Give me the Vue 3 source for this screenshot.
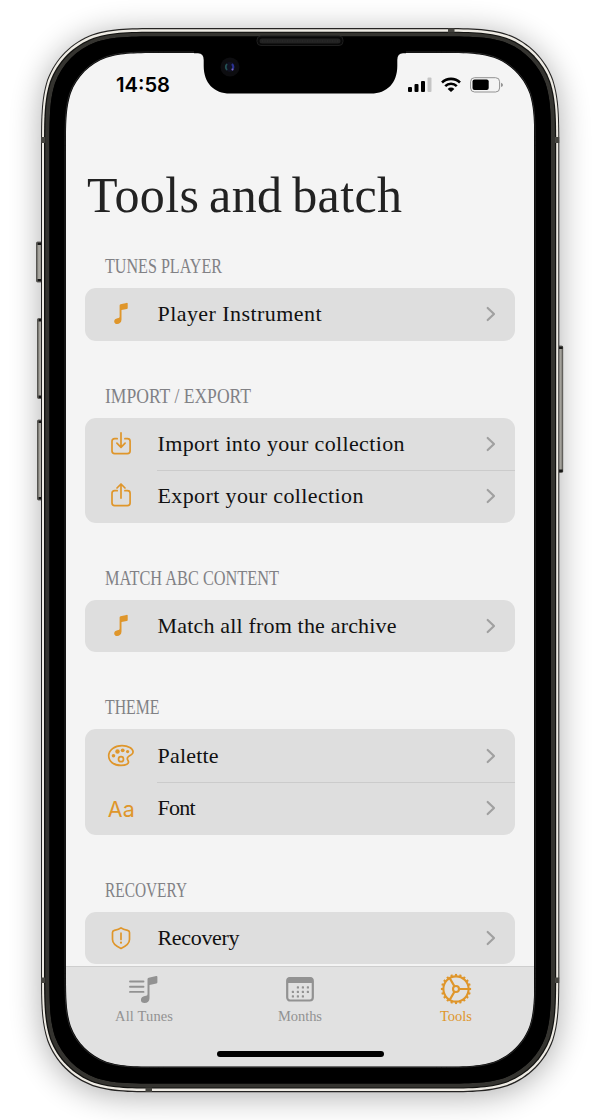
<script setup>
const groups = [
  { title: 'TUNES PLAYER', w: 117, rows: [{ icon: 'note', label: 'Player Instrument', w: 164 }] },
  { title: 'IMPORT / EXPORT', w: 146, rows: [
    { icon: 'import', label: 'Import into your collection', w: 247 },
    { icon: 'export', label: 'Export your collection', w: 206 }
  ] },
  { title: 'MATCH ABC CONTENT', w: 174, rows: [{ icon: 'note', label: 'Match all from the archive', w: 239 }] },
  { title: 'THEME', w: 54.5, rows: [
    { icon: 'palette', label: 'Palette', w: 61 },
    { icon: 'font', label: 'Font', w: 38 }
  ] },
  { title: 'RECOVERY', w: 82, rows: [{ icon: 'shield', label: 'Recovery', w: 82 }] }
]
const tabs = [
  { icon: 'tunes', label: 'All Tunes', w: 58 },
  { icon: 'months', label: 'Months', w: 44 },
  { icon: 'tools', label: 'Tools', w: 32, active: true }
]

// Rounded rectangle with continuous-curvature corners
function body(x0, y0, x1, y1, r) {
  const p = (sx, sy, a, b) => `${(sx < 0 ? x1 - a * r : x0 + a * r).toFixed(2)} ${(sy < 0 ? y1 - b * r : y0 + b * r).toFixed(2)}`
  const pts = [[0, 1.52866], [0, 1.08849], [0, 0.86841], [0.07491, 0.63149], [0.16906, 0.37282], [0.37282, 0.16906], [0.63149, 0.07491], [0.86841, 0], [1.08849, 0], [1.52866, 0]]
  const corner = (sx, sy, rev) => {
    const q = (rev ? [...pts].reverse() : pts).map(([a, b]) => p(sx, sy, a, b))
    return `${q[0]} C${q.slice(1, 4).join(' ')} C${q.slice(4, 7).join(' ')} C${q.slice(7, 10).join(' ')}`
  }
  return `M${corner(1, 1)} L${corner(-1, 1, true)} L${corner(-1, -1)} L${corner(1, -1, true)}Z`
}
const shape = body(41, 28, 559.3, 1092.3, 82)
const glass = body(66, 53, 534.3, 1066.5, 64)
const inner = body(49.5, 36.5, 551, 1083.5, 74)
const rim = body(65, 52, 535.2, 1067.4, 64.7)
const layers = [
  { d: shape, fill: '#242322' },
  { d: body(42, 29.2, 558.3, 1091, 81), fill: '#eeebe4' },
  { d: body(44, 31.8, 556.2, 1088.6, 79), fill: '#11110f' },
  { d: body(45.3, 32.8, 555, 1087.5, 78), fill: '#353430' },
  { d: inner, fill: '#000' }
]
const sideKeys = [
  { x: 36.5, y: 242, h: 40 },
  { x: 37.5, y: 318.5, h: 80 },
  { x: 37.5, y: 420, h: 80 },
  { x: 557.2, y: 346, h: 126.5 }
]
const teeth = Array.from({ length: 20 }, (_, i) => i * 18)
const dots = [[9, 9], [14, 9], [19, 9], [4, 13.5], [9, 13.5], [14, 13.5], [19, 13.5], [4, 18], [9, 18], [14, 18]]
</script>

<template>
  <div class="stage">
    <svg class="chassis" width="600" height="1120" viewBox="0 0 600 1120">
      <defs>
        <filter id="soft" x="-20%" y="-20%" width="140%" height="140%"><feGaussianBlur stdDeviation="16" /></filter>
        <linearGradient id="key"><stop offset="0" stop-color="#56544f" /><stop offset=".45" stop-color="#b5b3ac" /><stop offset="1" stop-color="#76746e" /></linearGradient>
      </defs>
      <path :d="shape" fill="#000" opacity=".32" transform="translate(0 4)" filter="url(#soft)" />
      <g v-for="k in sideKeys" :key="k.y">
        <rect :x="k.x" :y="k.y" width="5.5" :height="k.h" rx="1" fill="url(#key)" stroke="#393833" stroke-width=".7" />
        <rect :x="k.x + 1" :y="k.y + .5" width="4.5" height="2.5" fill="#171716" />
        <rect :x="k.x + 1" :y="k.y + k.h - 3" width="4.5" height="2.5" fill="#171716" />
      </g>
      <path v-for="(l, i) in layers" :key="i" :d="l.d" :fill="l.fill" />
      <g fill="#45443f">
        <rect x="41" y="137" width="4.2" height="6" /><rect x="555" y="137" width="4.2" height="6" />
        <rect x="41" y="977.5" width="4.2" height="5.5" /><rect x="555" y="977.5" width="4.2" height="5.5" />
        <rect x="448" y="28.3" width="6.5" height="4.2" /><rect x="145.5" y="1087.6" width="6.5" height="4.4" />
      </g>
    </svg>

    <main class="screen">
      <header class="status">
        <svg class="clock" width="54" height="24"><text x="0" y="19.2" textLength="54" lengthAdjust="spacingAndGlyphs">14:58</text></svg>
        <div class="signals">
          <svg width="24" height="16" viewBox="0 0 24 16">
            <rect x="0" y="10" width="4" height="5" rx="1" /><rect x="6.5" y="7" width="4" height="8" rx="1" /><rect x="13" y="4" width="4" height="11" rx="1" /><rect x="19.5" y="0.5" width="4" height="14.5" rx="1" fill="#c5c5c5" />
          </svg>
          <svg width="20" height="16" viewBox="0 0 20 16" fill="none" stroke="#000" stroke-width="2.6">
            <path d="M1 5.5a13 13 0 0 1 18 0M4.2 9.1a8.4 8.4 0 0 1 11.6 0" /><path d="M10 15 6.6 11.9a4.9 4.9 0 0 1 6.8 0Z" fill="#000" stroke="none" />
          </svg>
          <svg width="33" height="16" viewBox="0 0 33 16">
            <rect x=".6" y=".7" width="29" height="14.3" rx="4" fill="none" stroke="#929292" stroke-width="1" /><rect x="2.5" y="2.6" width="16.2" height="10.5" rx="2" /><path d="M31 5.7q2 .7 2 2.2t-2 2.2Z" fill="#929292" />
          </svg>
        </div>
      </header>

      <h1 class="title"><svg width="315" height="60"><text x="0" y="47.4" textLength="315" lengthAdjust="spacing">Tools and batch</text></svg></h1>

      <section v-for="g in groups" :key="g.title" class="group">
        <h2 class="caption"><svg :width="g.w" height="24"><text x="0" y="18.5" :textLength="g.w" lengthAdjust="spacingAndGlyphs">{{ g.title }}</text></svg></h2>
        <div class="card">
          <div v-for="r in g.rows" :key="r.label" class="row">
            <div class="icon">
              <svg v-if="r.icon === 'note'" width="28" height="28" viewBox="0 0 28 28" fill="#df962b">
                <path d="M12.6 5.5q0-1 .9-1.3l6-1.3q1.200-.2 1.200.7v4.300q0 .8-1 1l-5.200 1.200v9.400c0 2.900-2 4.500-4.400 4.500-1.700 0-2.900-1.100-2.900-2.600 0-1.800 1.300-2.700 3.300-3.100l1.100-.3q1-.3 1-1.200Z" />
              </svg>
              <svg v-else-if="r.icon === 'import'" class="line" width="28" height="28" viewBox="0 0 28 28">
                <path d="M10.200 8.700H7.700Q5 8.700 5 11.300v9.700q0 2.600 2.700 2.600h12.700q2.700 0 2.700-2.600v-9.700q0-2.600-2.700-2.600h-2.500M14 2.800v14.300M9.900 13.200l4.100 4.100 4.100-4.100" />
              </svg>
              <svg v-else-if="r.icon === 'export'" class="line" width="28" height="28" viewBox="0 0 28 28">
                <path d="M10.200 8.700H7.700Q5 8.700 5 11.300V21q0 2.600 2.700 2.600h12.700q2.700 0 2.700-2.600v-9.700q0-2.600-2.700-2.600h-2.500M14 16.100V2.300M10 6l4-4 4 4" />
              </svg>
              <svg v-else-if="r.icon === 'palette'" class="line" width="28" height="28" viewBox="0 0 28 28">
                <path d="M15 3.700C7.500 3.700 1.700 8 1.700 13.800c0 5.700 5.100 9.600 12.300 9.600 4.500 0 7.500-1.300 7.500-3.300 0-1.700-1.200-2-1.200-3.400 0-2 1.400-2.600 3.300-3.500 1.600-.7 2.500-1.500 2.500-3.100 0-3.700-5-6.400-11.100-6.400Z" />
                <circle cx="14" cy="17.200" r="2.500" /><g class="solid"><circle cx="6.500" cy="13.800" r="1.800" /><circle cx="10.500" cy="9.500" r="2.200" /><circle cx="15.700" cy="8.300" r="1.900" /><circle cx="20.600" cy="9.600" r="1.600" /></g>
              </svg>
              <span v-else-if="r.icon === 'font'" class="aa">Aa</span>
              <svg v-else class="line" width="28" height="28" viewBox="0 0 28 28">
                <path d="M14 3.800c-1.600 1.400-4.100 2.100-6.600 2.600q-1.900.4-1.900 2v7.200c0 4.100 3.100 6.500 8.500 8.900 5.400-2.400 8.500-4.800 8.500-8.900V8.400q0-1.600-1.900-2c-2.500-.5-5-1.200-6.600-2.600ZM14 9.200v6.200" /><circle class="solid" cx="14" cy="18.700" r="1.100" />
              </svg>
            </div>
            <div class="cell">
              <svg class="label" :width="r.w" height="30"><text x=".5" y="21.900" :textLength="r.w" lengthAdjust="spacing">{{ r.label }}</text></svg>
              <svg width="10" height="16" viewBox="0 0 10 16" fill="none" stroke="#a0a0a0" stroke-width="2.200" stroke-linecap="round" stroke-linejoin="round"><path d="M1.700 2l6.300 6-6.300 6" /></svg>
            </div>
          </div>
        </div>
      </section>

      <nav class="tabs">
        <div v-for="t in tabs" :key="t.label" class="tab" :class="{ active: t.active }">
          <svg v-if="t.icon === 'tunes'" width="30" height="32" viewBox="0 0 30 32" fill="currentColor">
            <path d="M1 8.500h13.500M1 13.700h13.500M1 18.900h13.500" stroke="currentColor" stroke-width="1.900" stroke-linecap="round" /><path d="M18.500 6.300q0-1.300 1.200-1.600l7.500-1.600q1.200-.2 1.200.9v5.200q0 1-1 1.200l-6.900 1.600v13.300c0 3.100-2 4.700-5 4.700-2.300 0-3.600-1.300-3.600-3.100 0-2.100 1.600-3.400 4-3.800l1.300-.3q1.300-.3 1.300-1.600Z" />
          </svg>
          <svg v-else-if="t.icon === 'months'" width="28" height="32" viewBox="0 0 28 32" fill="currentColor">
            <path d="M1 10V8q0-4 4-4h18q4 0 4 4v2Z" /><rect x="1.200" y="5" width="25.600" height="22.500" rx="3" fill="none" stroke="currentColor" stroke-width="2.200" />
            <g transform="translate(3 5)"><rect v-for="(d, i) in dots" :key="i" :x="d[0] - 1.200" :y="d[1] - 0.700" width="2.200" height="2.200" rx=".6" /></g>
          </svg>
          <svg v-else width="32" height="32" viewBox="0 0 32 32" fill="none" stroke="currentColor" stroke-width="2.100">
            <circle cx="16" cy="16" r="12.600" /><circle cx="16" cy="16" r="3" /><path d="M19 16h9.600M14.500 13.400 9.700 5.100M14.500 18.600l-4.800 8.300" />
            <path v-for="a in teeth" :key="a" d="M16 3.300V.9" stroke-width="2.100" :transform="`rotate(${a} 16 16)`" />
          </svg>
          <svg class="tab-label" :width="t.w" height="20"><text x="0" y="14.700" :textLength="t.w" lengthAdjust="spacing">{{ t.label }}</text></svg>
        </div>
        <i class="home"></i>
      </nav>
    </main>

    <svg class="bezel" width="600" height="1120" viewBox="0 0 600 1120">
      <path :d="inner + glass" fill-rule="evenodd" />
      <path :d="rim" fill="none" stroke="#3a3a3a" stroke-width=".7" />
      <path d="M194 50H406V53.200H403Q397.300 53.200 397.300 60V66C397.300 83 387 93.600 371 93.600H230C214 93.600 203.700 83 203.700 66V60Q203.700 53.200 198 53.200H194Z" />
      <rect x="257" y="36" width="86" height="9.500" rx="4" fill="#080808" stroke="#1e1e1e" stroke-width="1" />
      <rect x="259.500" y="38.500" width="81" height="5" rx="2.500" fill="#222" /><path d="M262 41h76" stroke="#2c2c2c" stroke-dasharray="1 1.500" />
      <circle cx="230" cy="67" r="9.500" fill="#0d0d10" /><circle cx="230" cy="67" r="5" fill="#111222" />
      <path d="M227 64q-2.500 3 0 6" fill="none" stroke="#245154" stroke-width="1.800" /><path d="M232 64q2.500 3 0 6" fill="none" stroke="#2a3190" stroke-width="2" /><circle cx="232.500" cy="69.500" r="1" fill="#7e68b8" />
    </svg>
  </div>
</template>

<style>
body { margin: 0; background: #fff; }
</style>

<style scoped>
.stage { position: relative; box-sizing: border-box; width: 600px; height: 1120px; padding: 53px 65.700px 0 66px; background: #fff; overflow: hidden; font-family: "Liberation Serif", serif; }
svg { display: block; flex: none; }
.chassis, .bezel { position: absolute; inset: 0; pointer-events: none; }
.screen { position: relative; display: flex; flex-direction: column; box-sizing: border-box; height: 1013.500px; overflow: hidden; background: #f4f4f4; border-radius: 50px; }
.screen text { fill: currentColor; }
.status { display: flex; justify-content: space-between; align-items: center; height: 64px; padding: 0 31.500px 0 49.500px; box-sizing: border-box; flex: none; }
.clock { font: 600 20px Inter, sans-serif; overflow: visible; }
.signals { display: flex; gap: 9px; }
.title { flex: none; margin: 0; height: 122.500px; padding: 48px 0 0 20.500px; box-sizing: border-box; font-size: 50px; font-weight: 400; color: #222; word-spacing: -3px; }
.title svg, .caption svg { overflow: visible; }
.group { flex: none; margin-bottom: 28.500px; }
.caption { margin: 0; height: 48.500px; box-sizing: border-box; padding: 14.500px 0 0 39px; font-size: 20px; font-weight: 400; color: #818185; }
.card { margin: 0 19.500px 0 19.300px; border-radius: 11px; background: #dedede; overflow: hidden; }
.row { display: flex; height: 52.600px; }
.icon { width: 72px; display: flex; align-items: center; justify-content: center; color: #df962b; }
.line { fill: none; stroke: #df962b; stroke-width: 1.700; stroke-linecap: round; stroke-linejoin: round; }
.solid { fill: #df962b; stroke: none; }
.aa { font: 400 21.500px Inter, sans-serif; padding-top: 1px; }
.cell { flex: 1; display: flex; align-items: center; justify-content: space-between; padding-right: 19px; box-sizing: border-box; }
.row + .row .cell { box-shadow: inset 0 1px #cbcbcb; }
.label { font-size: 22px; color: #111; overflow: visible; }
.tabs { position: absolute; left: 0; right: 0; bottom: 0; display: grid; grid-template-columns: repeat(3, 1fr); height: 100.700px; box-sizing: border-box; border-top: 1px solid #cecece; background: #e1e1e1; }
.tab { display: flex; flex-direction: column; align-items: center; padding-top: 6px; color: #929292; }
.tab-label { font-size: 14.500px; overflow: visible; margin-top: 1px; }
.active { color: #df962b; }
.home { position: absolute; left: 151px; bottom: 10px; width: 166.500px; height: 5.500px; border-radius: 3px; background: #000; }
</style>
